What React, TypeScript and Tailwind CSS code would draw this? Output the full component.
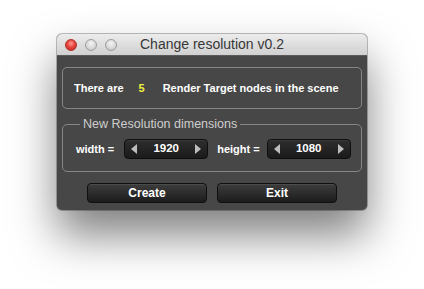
import React from 'react';

function Light({ red }: { red?: boolean }) {
  return (
    <span
      className={`block w-[12px] h-[12px] rounded-full border ${
        red
          ? 'border-[#b0302a] bg-[radial-gradient(circle_at_50%_35%,#ff9a92_0%,#e8463e_45%,#b8231c_100%)]'
          : 'border-[#9d9d9d] bg-[radial-gradient(circle_at_50%_35%,#f4f4f4_0%,#d9d9d9_55%,#bdbdbd_100%)]'
      }`}
    />
  );
}

function Spinner({ value }: { value: string }) {
  return (
    <div className="flex shrink-0 items-center justify-between w-[84px] h-[20px] px-[6px] rounded-[4px] border border-[#0e0e0e] bg-[linear-gradient(#2e2e2e,#1a1a1a)] shadow-[inset_0_1px_0_rgba(255,255,255,0.06)]">
      <svg width="6" height="10" viewBox="0 0 6 10">
        <path d="M6 0 L0 5 L6 10 Z" fill="#bdbdbd" />
      </svg>
      <span className="text-white font-bold text-[11.5px]">{value}</span>
      <svg width="6" height="10" viewBox="0 0 6 10">
        <path d="M0 0 L6 5 L0 10 Z" fill="#bdbdbd" />
      </svg>
    </div>
  );
}

function Button({ label }: { label: string }) {
  return (
    <button className="w-[120px] h-[20px] rounded-[4px] border border-[#0f0f0f] bg-[linear-gradient(#3d3d3d,#1c1c1c)] shadow-[inset_0_1px_0_rgba(255,255,255,0.08)] text-white font-bold text-[12px] leading-none">
      {label}
    </button>
  );
}

export default function App() {
  return (
    <div
      className="w-[424px] h-[289px] bg-white overflow-hidden pt-[34px] pl-[57px]"
      style={{ fontFamily: '"Liberation Sans", Arial, sans-serif' }}
    >
      <div className="w-[310px] rounded-[5px] overflow-hidden bg-[#474747] shadow-[0_25px_45px_rgba(0,0,0,0.5),0_0_0_1px_rgba(0,0,0,0.25)]">
        <div className="relative h-[22px] flex items-center bg-[linear-gradient(#ececec,#d0d0d0)] border-b border-[#5a5a5a]">
          <div className="flex items-center gap-[8px] pl-[8px]">
            <Light red />
            <Light />
            <Light />
          </div>
          <div className="absolute inset-0 flex items-center justify-center text-[14px] text-[#383838]">
            Change resolution v0.2
          </div>
        </div>

        <div className="px-[5px] pt-[11px] pb-[7px]">
          <div className="h-[42px] flex items-center pl-[11px] rounded-[5px] border border-[#858585] text-white font-bold text-[11px] whitespace-nowrap">
            <span>There are</span>
            <span className="ml-[15px] text-[#f0f040]">5</span>
            <span className="ml-[18px]">Render Target nodes in the scene</span>
          </div>

          <fieldset className="mt-[8px] rounded-[5px] border border-[#858585] pl-[13px] pr-[9px] pb-[12px]">
            <legend className="ml-[4px] px-[3px] text-[12.5px] leading-[15px] text-[#cdcdcd]">
              New Resolution dimensions
            </legend>
            <div className="flex items-center mt-[7px] text-white font-bold text-[11px] whitespace-nowrap">
              <span>width =</span>
              <div className="ml-[10px]">
                <Spinner value="1920" />
              </div>
              <span className="ml-[9px]">height =</span>
              <div className="ml-[7px]">
                <Spinner value="1080" />
              </div>
            </div>
          </fieldset>

          <div className="flex justify-center gap-[10px] mt-[11px]">
            <Button label="Create" />
            <Button label="Exit" />
          </div>
        </div>
      </div>
    </div>
  );
}
